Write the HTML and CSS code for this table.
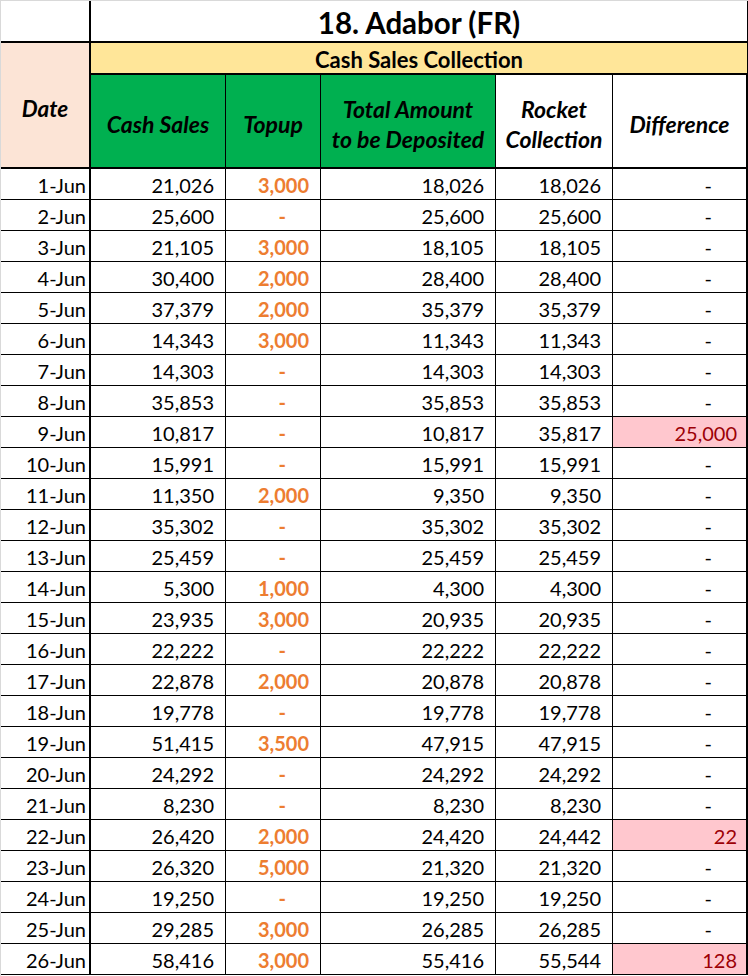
FILE: index.html
```html
<!DOCTYPE html>
<html lang="en">
<head>
<meta charset="utf-8">
<title>18. Adabor (FR)</title>
<link rel="stylesheet" href="styles.css">
</head>
<body>
<div class="sheet">
  <div class="cell blank thick-r thick-b"></div>
  <div class="cell title span5 thick-b">18. Adabor (FR)</div>
  <div class="cell date-head thick-r thick-b">Date</div>
  <div class="cell group span5 thick-b">Cash Sales Collection</div>
  <div class="cell head green thick-b">Cash Sales</div>
  <div class="cell head green thick-b">Topup</div>
  <div class="cell head green thick-b">Total Amount<br>to be Deposited</div>
  <div class="cell head thick-b">Rocket<br>Collection</div>
  <div class="cell head last thick-b">Difference</div>

  <div class="cell d">1-Jun</div><div class="cell n">21,026</div><div class="cell n t">3,000</div><div class="cell n">18,026</div><div class="cell n">18,026</div><div class="cell n z last">-</div>
  <div class="cell d">2-Jun</div><div class="cell n">25,600</div><div class="cell n t z">-</div><div class="cell n">25,600</div><div class="cell n">25,600</div><div class="cell n z last">-</div>
  <div class="cell d">3-Jun</div><div class="cell n">21,105</div><div class="cell n t">3,000</div><div class="cell n">18,105</div><div class="cell n">18,105</div><div class="cell n z last">-</div>
  <div class="cell d">4-Jun</div><div class="cell n">30,400</div><div class="cell n t">2,000</div><div class="cell n">28,400</div><div class="cell n">28,400</div><div class="cell n z last">-</div>
  <div class="cell d">5-Jun</div><div class="cell n">37,379</div><div class="cell n t">2,000</div><div class="cell n">35,379</div><div class="cell n">35,379</div><div class="cell n z last">-</div>
  <div class="cell d">6-Jun</div><div class="cell n">14,343</div><div class="cell n t">3,000</div><div class="cell n">11,343</div><div class="cell n">11,343</div><div class="cell n z last">-</div>
  <div class="cell d">7-Jun</div><div class="cell n">14,303</div><div class="cell n t z">-</div><div class="cell n">14,303</div><div class="cell n">14,303</div><div class="cell n z last">-</div>
  <div class="cell d">8-Jun</div><div class="cell n">35,853</div><div class="cell n t z">-</div><div class="cell n">35,853</div><div class="cell n">35,853</div><div class="cell n z last">-</div>
  <div class="cell d">9-Jun</div><div class="cell n">10,817</div><div class="cell n t z">-</div><div class="cell n">10,817</div><div class="cell n">35,817</div><div class="cell n bad last">25,000</div>
  <div class="cell d">10-Jun</div><div class="cell n">15,991</div><div class="cell n t z">-</div><div class="cell n">15,991</div><div class="cell n">15,991</div><div class="cell n z last">-</div>
  <div class="cell d">11-Jun</div><div class="cell n">11,350</div><div class="cell n t">2,000</div><div class="cell n">9,350</div><div class="cell n">9,350</div><div class="cell n z last">-</div>
  <div class="cell d">12-Jun</div><div class="cell n">35,302</div><div class="cell n t z">-</div><div class="cell n">35,302</div><div class="cell n">35,302</div><div class="cell n z last">-</div>
  <div class="cell d">13-Jun</div><div class="cell n">25,459</div><div class="cell n t z">-</div><div class="cell n">25,459</div><div class="cell n">25,459</div><div class="cell n z last">-</div>
  <div class="cell d">14-Jun</div><div class="cell n">5,300</div><div class="cell n t">1,000</div><div class="cell n">4,300</div><div class="cell n">4,300</div><div class="cell n z last">-</div>
  <div class="cell d">15-Jun</div><div class="cell n">23,935</div><div class="cell n t">3,000</div><div class="cell n">20,935</div><div class="cell n">20,935</div><div class="cell n z last">-</div>
  <div class="cell d">16-Jun</div><div class="cell n">22,222</div><div class="cell n t z">-</div><div class="cell n">22,222</div><div class="cell n">22,222</div><div class="cell n z last">-</div>
  <div class="cell d">17-Jun</div><div class="cell n">22,878</div><div class="cell n t">2,000</div><div class="cell n">20,878</div><div class="cell n">20,878</div><div class="cell n z last">-</div>
  <div class="cell d">18-Jun</div><div class="cell n">19,778</div><div class="cell n t z">-</div><div class="cell n">19,778</div><div class="cell n">19,778</div><div class="cell n z last">-</div>
  <div class="cell d">19-Jun</div><div class="cell n">51,415</div><div class="cell n t">3,500</div><div class="cell n">47,915</div><div class="cell n">47,915</div><div class="cell n z last">-</div>
  <div class="cell d">20-Jun</div><div class="cell n">24,292</div><div class="cell n t z">-</div><div class="cell n">24,292</div><div class="cell n">24,292</div><div class="cell n z last">-</div>
  <div class="cell d">21-Jun</div><div class="cell n">8,230</div><div class="cell n t z">-</div><div class="cell n">8,230</div><div class="cell n">8,230</div><div class="cell n z last">-</div>
  <div class="cell d">22-Jun</div><div class="cell n">26,420</div><div class="cell n t">2,000</div><div class="cell n">24,420</div><div class="cell n">24,442</div><div class="cell n bad last">22</div>
  <div class="cell d">23-Jun</div><div class="cell n">26,320</div><div class="cell n t">5,000</div><div class="cell n">21,320</div><div class="cell n">21,320</div><div class="cell n z last">-</div>
  <div class="cell d">24-Jun</div><div class="cell n">19,250</div><div class="cell n t z">-</div><div class="cell n">19,250</div><div class="cell n">19,250</div><div class="cell n z last">-</div>
  <div class="cell d">25-Jun</div><div class="cell n">29,285</div><div class="cell n t">3,000</div><div class="cell n">26,285</div><div class="cell n">26,285</div><div class="cell n z last">-</div>
  <div class="cell d">26-Jun</div><div class="cell n">58,416</div><div class="cell n t">3,000</div><div class="cell n">55,416</div><div class="cell n">55,544</div><div class="cell n bad last">128</div>
</div>
</body>
</html>
```

FILE: styles.css
```css
* { box-sizing: border-box; }

html, body {
  margin: 0;
  padding: 0;
  background: #ffffff;
}

.sheet {
  width: 748px;
  height: 976px;
  display: grid;
  grid-template-columns: 90px 135px 95px 175px 117px 135px;
  grid-template-rows: 42px 32px 94px repeat(26, 31px);
  border-top: 1px solid #d9d9d9;
  border-left: 1px solid #d9d9d9;
  font-family: Lato, "Open Sans", sans-serif;
  color: #000000;
  overflow: hidden;
}

.cell {
  border-right: 1px solid #000000;
  border-bottom: 1px solid #000000;
  background: #ffffff;
  display: flex;
  align-items: center;
  font-size: 20px;
  white-space: nowrap;
  min-width: 0;
}

.thick-r { border-right-width: 2px; }
.thick-b { border-bottom-width: 2px; }
.last { border-right-width: 2px; }

.span5 { grid-column: 2 / span 5; }

.title {
  justify-content: center;
  font-weight: 700;
  font-size: 29.5px;
  padding-top: 2px;
}

.group {
  background: #ffe699;
  justify-content: center;
  font-weight: 700;
  font-size: 22px;
  padding-top: 2px;
}

.date-head {
  grid-row: 2 / span 2;
  grid-column: 1;
  background: #fce4d6;
  justify-content: center;
  font-weight: 700;
  font-style: italic;
  font-size: 22.5px;
  padding-top: 6px;
}

.head {
  justify-content: center;
  text-align: center;
  font-weight: 700;
  font-style: italic;
  font-size: 23px;
  line-height: 30px;
  padding-top: 5px;
}

.green { background: #00b050; }

.d {
  justify-content: flex-end;
  padding-right: 3px;
  padding-top: 2px;
  border-right-width: 2px;
}

.n {
  justify-content: flex-end;
  padding-right: 11px;
  padding-top: 2px;
}

.t {
  color: #ed7d31;
  font-weight: 700;
}

.z { padding-right: 34px; }

.bad {
  background: #ffc7ce;
  color: #9c0006;
  padding-right: 9px;
}
```
